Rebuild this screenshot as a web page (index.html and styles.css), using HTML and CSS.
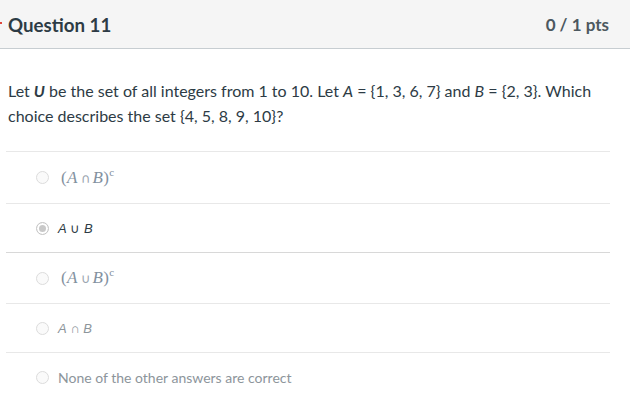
FILE: index.html
```html
<!DOCTYPE html>
<html>
<head>
<meta charset="utf-8">
<link rel="stylesheet" href="styles.css">
</head>
<body>
<div class="question">
  <div class="header">
    <span class="flag"></span>
    <h2 class="title">Question 11</h2>
    <span class="pts">0 / 1 pts</span>
  </div>
  <div class="text">Let <b><i>U</i></b> be the set of all integers from 1 to 10. Let <i>A</i> = {1, 3, 6, 7} and <i>B</i> = {2, 3}. Which choice describes the set {4, 5, 8, 9, 10}?</div>
  <div class="answers">
    <div class="answer">
      <span class="radio"></span>
      <span class="math">(<i>A</i><span class="op">∩</span><i>B</i>)<sup>c</sup></span>
    </div>
    <div class="answer selected">
      <span class="radio"></span>
      <span class="plain"><i>A</i> ∪ <i>B</i></span>
    </div>
    <div class="answer">
      <span class="radio"></span>
      <span class="math">(<i>A</i><span class="op">∪</span><i>B</i>)<sup>c</sup></span>
    </div>
    <div class="answer short">
      <span class="radio"></span>
      <span class="plain grey"><i>A</i> ∩ <i>B</i></span>
    </div>
    <div class="answer last">
      <span class="radio"></span>
      <span class="none">None of the other answers are correct</span>
    </div>
  </div>
</div>
</body>
</html>
```
FILE: styles.css
```css
html, body {
  margin: 0;
  padding: 0;
  background: #fff;
}
body {
  font-family: Lato, "Liberation Sans", sans-serif;
  color: #2d3b45;
  width: 630px;
  height: 418px;
  overflow: hidden;
}
.header {
  display: flex;
  align-items: center;
  height: 48px;
  background: #f5f5f5;
  border-bottom: 1px solid #c7cdd1;
  padding: 0 21px 0 0;
}
.flag {
  width: 2px;
  height: 2px;
  background: #e0473c;
  margin: -2px 6px 0 0;
}
.title {
  margin: 0;
  font-size: 18.7px;
  font-weight: 700;
  color: #2d3b45;
  flex: 1;
  padding-top: 2px;
}
.pts {
  font-size: 17px;
  font-weight: 700;
  color: #4c5860;
  padding-top: 1px;
}
.text {
  padding: 29px 20px 0 8px;
  font-size: 16px;
  line-height: 25px;
  color: #2d3b45;
}
.text i {
  font-style: italic;
}
.answers {
  margin: 23px 20px 0 6px;
}
.answer {
  display: flex;
  align-items: center;
  height: 49px;
  border-top: 1px solid #e8e8e8;
  padding-left: 30px;
}
.answer:first-child {
  height: 51px;
}
.answer.selected {
  border-bottom: 1px solid #d8d8d8;
  height: 48px;
}
.answer.selected + .answer {
  border-top: none;
  height: 50px;
}
.answer.short {
  height: 48px;
}
.answer.last {
  border-bottom: none;
}
.radio {
  width: 11px;
  height: 11px;
  border: 1px solid #dcdcdc;
  border-radius: 50%;
  background: #fafafa;
  margin-right: 9px;
  flex: none;
}
.selected .radio {
  border: 1px solid #c4c4c4;
  background: #fff;
  box-shadow: inset 0 0 0 2px #fff, inset 0 0 0 6px #c9c9c9;
}
.math {
  font-family: "Liberation Serif", serif;
  font-size: 17px;
  color: #8391a0;
  padding-left: 3px;
  letter-spacing: 0.3px;
}
.math .op {
  font-family: "DejaVu Sans", sans-serif;
  font-size: 13px;
  margin: 0 2px 0 3px;
  color: #9aa5b0;
}
.math sup {
  font-size: 11px;
  font-style: normal;
  vertical-align: 7px;
  line-height: 0;
}
.plain {
  font-family: "Liberation Sans", sans-serif;
  font-size: 13px;
  color: #2d3b45;
}
.plain.grey {
  color: #8d959b;
}
.none {
  font-size: 14px;
  color: #8d959b;
}
```
